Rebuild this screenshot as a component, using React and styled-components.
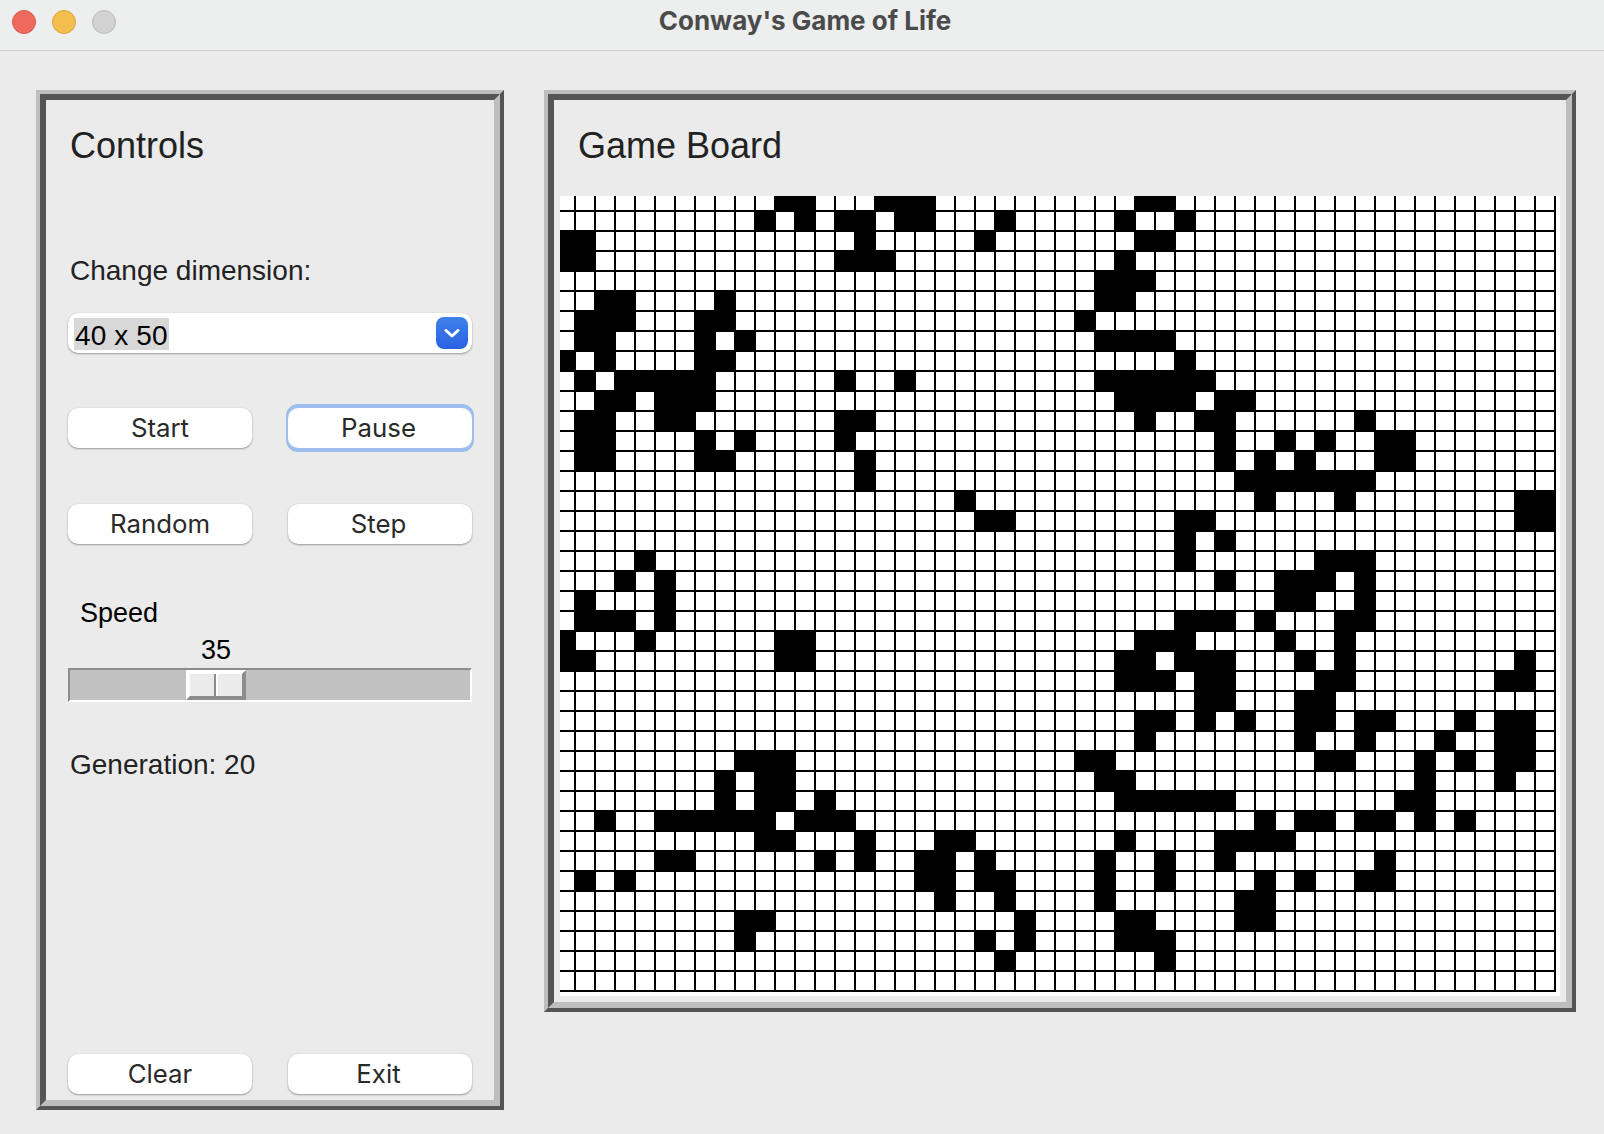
import React from "react";
import styled, { createGlobalStyle } from "styled-components";

const GlobalStyle = createGlobalStyle`
  html, body {
    margin: 0;
    padding: 0;
    background: #ebebeb;
  }
  body {
    font-family: "Liberation Sans", Arial, sans-serif;
    color: #222;
  }
`;

const Window = styled.div`
  width: 1604px;
  height: 1134px;
  overflow: hidden;
  display: flex;
  flex-direction: column;
`;

const TitleBar = styled.header`
  position: relative;
  flex: none;
  height: 50px;
  display: flex;
  align-items: center;
  justify-content: center;
  background: #edeeee;
  border-bottom: 1px solid #d0d0d0;
`;

const Lights = styled.div`
  position: absolute;
  left: 12px;
  top: 10px;
  display: flex;
  gap: 16px;
`;

const Light = styled.span`
  box-sizing: border-box;
  width: 24px;
  height: 24px;
  border-radius: 50%;
  background: ${(props) => props.$fill};
  border: 1px solid ${(props) => props.$edge};
`;

const WindowTitle = styled.div`
  font-family: Inter, "Liberation Sans", sans-serif;
  font-weight: 700;
  font-size: 26px;
  color: #4b4b4b;
  margin-left: 6px;
  margin-top: -10px;
`;

const Main = styled.main`
  flex: 1;
  display: flex;
  align-items: flex-start;
  gap: 40px;
  padding: 39px 28px 0 36px;
`;

// two nested borders give the etched look of the Swing panels
const EtchedOuter = styled.section`
  box-sizing: border-box;
  flex: none;
  width: ${(props) => props.$width}px;
  height: ${(props) => props.$height}px;
  border: 4px solid;
  border-color: #bebebe #555 #555 #bebebe;
`;

const EtchedInner = styled.div`
  box-sizing: border-box;
  height: 100%;
  border: 6px solid;
  border-color: #555 #bebebe #bebebe #555;
  display: flex;
  flex-direction: column;
`;

const Heading = styled.h2`
  margin: 0;
  height: 96px;
  font-weight: 400;
  font-size: 36px;
  line-height: 92px;
  color: #222;
`;

const BoardHeading = styled(Heading)`
  margin-left: 18px;
`;

const ControlsHeading = styled(Heading)`
  margin-left: 2px;
  height: 155px;
`;

const ControlsBody = styled.div`
  flex: 1;
  display: flex;
  flex-direction: column;
  padding: 0 22px 6px;
`;

const Label = styled.div`
  margin-left: 2px;
  font-size: 28px;
  line-height: 32px;
  color: #222;
`;

const Select = styled.div`
  margin-top: 26px;
  height: 40px;
  border-radius: 10px;
  background: #fff;
  box-shadow: 0 1px 2px rgba(0, 0, 0, 0.35), 0 0 1px rgba(0, 0, 0, 0.15);
  display: flex;
  align-items: center;
  justify-content: space-between;
  padding: 0 4px 0 6px;
`;

const SelectedValue = styled.span`
  margin-top: 2px;
  height: 32px;
  padding: 0 1px;
  background: #d8d8d8;
  font-size: 28px;
  line-height: 35px;
  letter-spacing: 0.1px;
  color: #000;
`;

const SelectArrow = styled.span`
  width: 32px;
  height: 32px;
  border-radius: 8px;
  background: linear-gradient(#3f80ea, #2a62e2);
  display: flex;
  align-items: center;
  justify-content: center;
`;

const ButtonGrid = styled.div`
  display: grid;
  grid-template-columns: 184px 184px;
  column-gap: 36px;
  row-gap: 56px;
`;

const ActionButtons = styled(ButtonGrid)`
  margin-top: 55px;
`;

const BottomButtons = styled(ButtonGrid)`
  margin-top: auto;
`;

const Button = styled.button`
  height: 40px;
  padding: 0 0 2px;
  border: none;
  border-radius: 10px;
  background: #fff;
  font-family: Inter, "Liberation Sans", sans-serif;
  font-size: 25.8px;
  color: #2a2a2a;
  box-shadow: ${(props) =>
    props.$focused
      ? "0 -2px 0 2px #9dbdec, 0 2px 0 2px #9dbdec"
      : "0 1px 2px rgba(0, 0, 0, 0.35), 0 0 1px rgba(0, 0, 0, 0.15)"};

  &:nth-child(even) {
    padding-right: 3px;
  }
`;

const SpeedLabel = styled.div`
  margin: 53px 0 0 12px;
  font-size: 27px;
  line-height: 32px;
  color: #000;
`;

const SpeedValue = styled.div`
  margin: 5px 0 0 133px;
  font-size: 27px;
  line-height: 32px;
  color: #000;
`;

const SliderTrack = styled.div`
  box-sizing: border-box;
  position: relative;
  margin-top: 2px;
  height: 34px;
  background: #c1c1c1;
  border: 2px solid;
  border-color: #8c8c8c #fff #fff #8c8c8c;
`;

const SliderThumb = styled.div`
  position: absolute;
  left: 116px;
  top: 0;
  width: 60px;
  height: 30px;
  box-sizing: border-box;
  display: flex;
  justify-content: center;
  border: 4px solid;
  border-color: #fff #8c8c8c #8c8c8c #fff;
  background: #ebebeb;
`;

const ThumbDivider = styled.span`
  width: 0;
  border-left: 2px solid #8c8c8c;
  border-right: 2px solid #fff;
`;

const Generation = styled(Label)`
  margin-top: 47px;
`;

const BoardFrame = styled.div`
  padding: 0 6px 6px;
`;

const Board = styled.div`
  width: 996px;
  height: 796px;
  padding: 0 4px 4px 0;
  background: #fff;
`;

// the black grid background shows through the 2px gaps as the cell lines
const Grid = styled.div`
  display: grid;
  width: 100%;
  height: 100%;
  grid-template-columns: 14px repeat(49, 18px);
  grid-template-rows: 14px repeat(39, 18px);
  gap: 2px;
  background: #000;
`;

const Cell = styled.div`
  background: ${(props) => (props.$alive ? "#000" : "#fff")};
`;

// live cells per row, as column numbers and ranges
const LIVE_ROWS = [
  "11-12 16-18 29-30",
  "10 12 14-15 17-18 22 28 31",
  "0-1 15 21 29-30",
  "0-1 14-16 28",
  "27-29",
  "2-3 8 27-28",
  "1-3 7-8 26",
  "1-2 7 9 27-30",
  "0 2 7-8 31",
  "1 3-7 14 17 27-32",
  "2-3 5-7 28-31 33-34",
  "1-2 5-6 14-15 29 32-33 40",
  "1-2 7 9 14 33 36 38 41-42",
  "1-2 7-8 15 33 35 37 41-42",
  "15 34-40",
  "20 35 39 48-49",
  "21-22 31-32 48-49",
  "31 33",
  "4 31 38-40",
  "3 5 33 36-38 40",
  "1 5 36-37 40",
  "1-3 5 31-33 35 39-40",
  "0 4 11-12 29-31 36 39",
  "0-1 11-12 28-29 31-33 37 39 48",
  "28-30 32-33 38-39 47-48",
  "32-33 37-38",
  "29-30 32 34 37-38 40-41 45 47-48",
  "29 37 40 44 47-48",
  "9-11 26-27 38-39 43 45 47-48",
  "8 10-11 27-28 43 47",
  "8 10-11 13 28-33 42-43",
  "2 5-10 12-14 35 37-38 40-41 43 45",
  "10-11 15 19-20 28 33-36",
  "5-6 13 15 18-19 21 27 30 33 41",
  "1 3 18-19 21-22 27 30 35 37 40-41",
  "19 22 27 34-35",
  "9-10 23 28-29 34-35",
  "9 21 23 28-30",
  "22 30",
  "",
];

const liveSets = LIVE_ROWS.map((row) => {
  const cols = new Set();
  row.split(" ").filter(Boolean).forEach((part) => {
    const [from, to] = part.split("-").map(Number);
    for (let c = from; c <= (to ?? from); c++) cols.add(c);
  });
  return cols;
});

function GameBoard() {
  const cells = [];
  liveSets.forEach((cols, r) => {
    for (let c = 0; c < 50; c++) {
      cells.push(<Cell key={`${r}-${c}`} $alive={cols.has(c)} />);
    }
  });
  return (
    <Board>
      <Grid>{cells}</Grid>
    </Board>
  );
}

export default function App() {
  return (
    <Window>
      <GlobalStyle />
      <TitleBar>
        <Lights>
          <Light $fill="#ee6a5f" $edge="#d9564b" />
          <Light $fill="#f5bf4f" $edge="#d9a63a" />
          <Light $fill="#d2d2d2" $edge="#bcbcbc" />
        </Lights>
        <WindowTitle>Conway's Game of Life</WindowTitle>
      </TitleBar>
      <Main>
        <EtchedOuter $width={468} $height={1020}>
          <EtchedInner>
            <ControlsBody>
              <ControlsHeading>Controls</ControlsHeading>
              <Label>Change dimension:</Label>
              <Select>
                <SelectedValue>40 x 50</SelectedValue>
                <SelectArrow>
                  <svg width="18" height="12" viewBox="0 0 18 12" fill="none">
                    <path d="M3 3.5 9 9 15 3.5" stroke="#fff" strokeWidth="3" strokeLinecap="round" strokeLinejoin="round" />
                  </svg>
                </SelectArrow>
              </Select>
              <ActionButtons>
                <Button>Start</Button>
                <Button $focused>Pause</Button>
                <Button>Random</Button>
                <Button>Step</Button>
              </ActionButtons>
              <SpeedLabel>Speed</SpeedLabel>
              <SpeedValue>35</SpeedValue>
              <SliderTrack>
                <SliderThumb>
                  <ThumbDivider />
                </SliderThumb>
              </SliderTrack>
              <Generation>Generation: 20</Generation>
              <BottomButtons>
                <Button>Clear</Button>
                <Button>Exit</Button>
              </BottomButtons>
            </ControlsBody>
          </EtchedInner>
        </EtchedOuter>
        <EtchedOuter $width={1032} $height={922}>
          <EtchedInner>
            <BoardFrame>
              <BoardHeading>Game Board</BoardHeading>
              <GameBoard />
            </BoardFrame>
          </EtchedInner>
        </EtchedOuter>
      </Main>
    </Window>
  );
}
